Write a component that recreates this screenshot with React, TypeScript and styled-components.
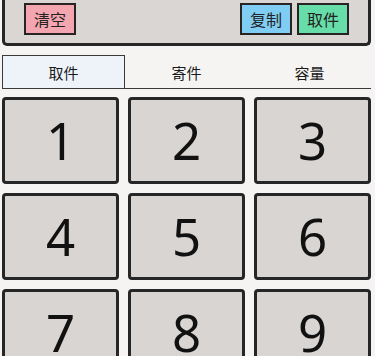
import React from "react";
import styled, { createGlobalStyle } from "styled-components";

const Global = createGlobalStyle`
  html, body { margin: 0; padding: 0; background: #f6f4f3; }
  body { font-family: "Noto Sans", "Noto Sans CJK SC", sans-serif; }
  * { box-sizing: border-box; }
`;

const Page = styled.div`
  width: 375px;
  height: 356px;
  overflow: hidden;
  padding: 0 4px 0 2px;
`;

const Panel = styled.div`
  height: 46px;
  background: #d9d6d4;
  border: 3px solid #262626;
  border-top: none;
  border-radius: 0 0 5px 5px;
  display: flex;
  align-items: flex-start;
  padding: 3px 19px 0 19px;
  gap: 5px;
`;

const Spacer = styled.div`
  flex: 1;
`;

const ActionButton = styled.button<{ $bg: string }>`
  height: 32px;
  width: 52px;
  padding: 0;
  background: ${(p) => p.$bg};
  border: 2px solid #2a2324;
  border-radius: 0;
  font-family: "Noto Sans CJK SC", sans-serif;
  font-size: 16px;
  color: #222;
  display: flex;
  align-items: center;
  justify-content: center;
`;

const Tabs = styled.div`
  margin-top: 9px;
  height: 34px;
  display: flex;
  border-bottom: 1px solid #3a3a3a;
`;

const Tab = styled.div<{ $active?: boolean }>`
  flex: 1;
  display: flex;
  align-items: center;
  justify-content: center;
  font-family: "Noto Sans CJK SC", sans-serif;
  font-size: 15px;
  color: #1a1a1a;
  background: ${(p) => (p.$active ? "#eef3fa" : "transparent")};
  border: ${(p) => (p.$active ? "1px solid #3a3a3a" : "1px solid transparent")};
  border-bottom: none;
`;

const Keypad = styled.div`
  margin-top: 8px;
  display: grid;
  grid-template-columns: repeat(3, 117px);
  grid-auto-rows: 87px;
  column-gap: 9px;
  row-gap: 9px;
`;

const Key = styled.button`
  background: #d8d5d3;
  border: 3px solid #262626;
  border-radius: 4px;
  padding: 0;
  font-family: "Noto Sans", sans-serif;
  font-size: 51px;
  font-weight: 400;
  color: #111;
  display: flex;
  align-items: center;
  justify-content: center;
  line-height: 1;
`;

export default function App() {
  return (
    <>
      <Global />
      <Page>
        <Panel>
          <ActionButton $bg="#f4a6b0">清空</ActionButton>
          <Spacer />
          <ActionButton $bg="#80cdf4">复制</ActionButton>
          <ActionButton $bg="#67dea9">取件</ActionButton>
        </Panel>
        <Tabs>
          <Tab $active>取件</Tab>
          <Tab>寄件</Tab>
          <Tab>容量</Tab>
        </Tabs>
        <Keypad>
          {["1", "2", "3", "4", "5", "6", "7", "8", "9"].map((d) => (
            <Key key={d}>{d}</Key>
          ))}
        </Keypad>
      </Page>
    </>
  );
}
